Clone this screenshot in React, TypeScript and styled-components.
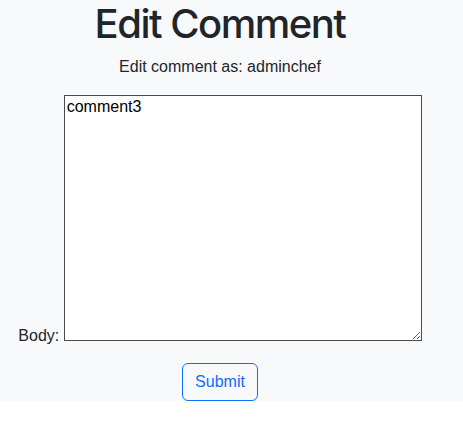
import React from "react";
import styled, { createGlobalStyle } from "styled-components";

const Global = createGlobalStyle`
  html, body { margin: 0; padding: 0; background: #ffffff; }
  body {
    font-family: "Liberation Sans", Arial, sans-serif;
    font-size: 16px;
    line-height: 1.5;
    color: #212529;
  }
`;

const Page = styled.div`
  background: #f8f9fb;
  padding: 0 23px 0 0;
  text-align: center;
`;

const Title = styled.h1`
  margin: 0 0 7px;
  font-family: Inter, "Liberation Sans", Arial, sans-serif;
  font-size: 40px;
  font-weight: 500;
  letter-spacing: -1.5px;
  line-height: 1.2;
  color: #212529;
`;

const Subtitle = styled.p`
  margin: 0 0 16px;
  font-size: 16px;
`;

const Form = styled.form`
  margin: 0;
`;

const FieldRow = styled.div`
  margin-bottom: 15px;
`;

const Label = styled.label`
  font-size: 16px;
`;

const BodyInput = styled.textarea`
  box-sizing: border-box;
  width: 358px;
  height: 246px;
  margin: 0;
  padding: 2px;
  border: 1px solid #4a4a4a;
  border-radius: 0;
  background: #ffffff;
  font-family: "Liberation Sans", Arial, sans-serif;
  font-size: 16px;
  line-height: normal;
  color: #000000;
  vertical-align: baseline;
  outline: none;
`;

const SubmitButton = styled.button`
  box-sizing: border-box;
  height: 38px;
  margin: 0;
  padding: 6px 12px;
  border: 1px solid #0d6efd;
  border-radius: 6px;
  background: transparent;
  color: #0d6efd;
  font-family: "Liberation Sans", Arial, sans-serif;
  font-size: 16px;
  line-height: 24px;
  vertical-align: top;
  cursor: pointer;
`;

const ButtonRow = styled.div`
  height: 38px;
`;

export default function App() {
  return (
    <>
      <Global />
      <Page>
        <Title>Edit Comment</Title>
        <Subtitle>Edit comment as: adminchef</Subtitle>
        <Form onSubmit={(e) => e.preventDefault()}>
          <FieldRow>
            <Label htmlFor="body">Body:</Label>{" "}
            <BodyInput id="body" defaultValue="comment3" />
          </FieldRow>
          <ButtonRow>
            <SubmitButton type="submit">Submit</SubmitButton>
          </ButtonRow>
        </Form>
      </Page>
    </>
  );
}
